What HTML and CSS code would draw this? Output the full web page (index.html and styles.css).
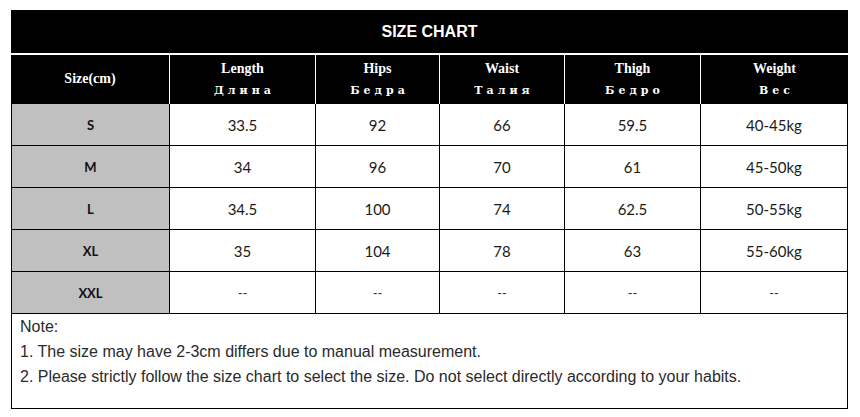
FILE: index.html
```html
<!DOCTYPE html>
<html>
<head>
<meta charset="utf-8">
<link rel="stylesheet" href="styles.css">
</head>
<body>
<div class="chart">
  <div class="title">SIZE CHART</div>
  <div class="head">
    <div class="hc"><span class="en">Size(cm)</span></div>
    <div class="hc"><span class="en">Length</span><span class="ru">Длина</span></div>
    <div class="hc"><span class="en">Hips</span><span class="ru">Бедра</span></div>
    <div class="hc"><span class="en">Waist</span><span class="ru">Талия</span></div>
    <div class="hc"><span class="en">Thigh</span><span class="ru">Бедро</span></div>
    <div class="hc"><span class="en">Weight</span><span class="ru">Вес</span></div>
  </div>
  <div class="body">
    <div class="row r1"><div class="sz">S</div><div class="c">33.5</div><div class="c">92</div><div class="c">66</div><div class="c">59.5</div><div class="c">40-45kg</div></div>
    <div class="row"><div class="sz">M</div><div class="c">34</div><div class="c">96</div><div class="c">70</div><div class="c">61</div><div class="c">45-50kg</div></div>
    <div class="row"><div class="sz">L</div><div class="c">34.5</div><div class="c">100</div><div class="c">74</div><div class="c">62.5</div><div class="c">50-55kg</div></div>
    <div class="row"><div class="sz">XL</div><div class="c">35</div><div class="c">104</div><div class="c">78</div><div class="c">63</div><div class="c">55-60kg</div></div>
    <div class="row"><div class="sz">XXL</div><div class="c dash">--</div><div class="c dash">--</div><div class="c dash">--</div><div class="c dash">--</div><div class="c dash">--</div></div>
  </div>
  <div class="notes">
    <p>Note:</p>
    <p>1. The size may have 2-3cm differs due to manual measurement.</p>
    <p>2. Please strictly follow the size chart to select the size. Do not select directly according to your habits.</p>
  </div>
</div>
</body>
</html>
```
FILE: styles.css
```css
html, body {
  margin: 0;
  padding: 0;
  background: #fff;
}
.chart {
  margin: 10px 0 0 11px;
  width: 837px;
}
.title {
  height: 43px;
  background: #000;
  color: #fff;
  font-family: "Liberation Sans", Arial, sans-serif;
  font-weight: bold;
  font-size: 16px;
  display: flex;
  align-items: center;
  justify-content: center;
  margin-bottom: 2px;
}
.head {
  display: grid;
  grid-template-columns: 159px 146px 124px 125px 136px 147px;
  height: 49px;
  background: #000;
}
.hc {
  border-right: 1px solid #fff;
  display: flex;
  flex-direction: column;
  align-items: center;
  justify-content: center;
  color: #fff;
}
.hc:last-child {
  border-right: none;
}
.en {
  font-family: "Liberation Serif", "Times New Roman", serif;
  font-weight: bold;
  font-size: 14px;
  line-height: 18px;
  margin-top: -2px;
}
.ru {
  font-family: "DejaVu Serif", serif;
  font-weight: bold;
  font-size: 11px;
  letter-spacing: 4px;
  line-height: 14px;
  margin-top: 6px;
  margin-right: -4px;
}
.body {
  border-left: 1px solid #000;
}
.row {
  display: grid;
  grid-template-columns: 158px 146px 124px 125px 136px 147px;
  height: 42px;
  box-sizing: border-box;
  border-bottom: 1px solid #000;
}
.sz, .c {
  border-right: 1px solid #000;
  display: flex;
  align-items: center;
  justify-content: center;
  font-family: Lato, "Liberation Sans", sans-serif;
}
.sz {
  background: #c0c0c0;
  font-weight: bold;
  font-size: 13px;
  color: #111;
}
.c {
  font-size: 15px;
  color: #1a1a1a;
}
.c.dash {
  font-size: 13px;
  color: #333;
}
.notes {
  border: 1px solid #000;
  border-top: none;
  height: 95px;
  box-sizing: border-box;
  padding: 0 0 0 8px;
  font-family: "Liberation Sans", Arial, sans-serif;
  font-size: 16px;
  color: #2a2a2a;
}
.notes p {
  margin: 0;
  line-height: 25px;
}
```
